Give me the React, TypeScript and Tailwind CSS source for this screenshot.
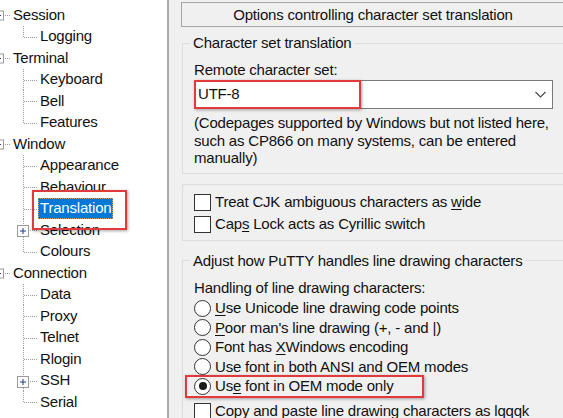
type Item = { t: string; l: 0 | 1; last?: boolean; plus?: boolean; sel?: boolean };

const tree: Item[] = [
  { t: 'Session', l: 0 },
  { t: 'Logging', l: 1, last: true },
  { t: 'Terminal', l: 0 },
  { t: 'Keyboard', l: 1 },
  { t: 'Bell', l: 1 },
  { t: 'Features', l: 1, last: true },
  { t: 'Window', l: 0 },
  { t: 'Appearance', l: 1 },
  { t: 'Behaviour', l: 1 },
  { t: 'Translation', l: 1, sel: true },
  { t: 'Selection', l: 1, plus: true },
  { t: 'Colours', l: 1, last: true },
  { t: 'Connection', l: 0 },
  { t: 'Data', l: 1 },
  { t: 'Proxy', l: 1 },
  { t: 'Telnet', l: 1 },
  { t: 'Rlogin', l: 1 },
  { t: 'SSH', l: 1, plus: true },
  { t: 'Serial', l: 1, last: true },
];

const H = 21.5;
const dot = { stroke: '#9a9a9a', strokeWidth: 1, strokeDasharray: '1 1' };

function TreeRow({ item }: { item: Item }) {
  const mid = Math.round(H / 2) + 0.5;
  return (
    <div className="flex h-[21.5px] items-center">
      {item.l === 0 ? (
        <svg width="11" height={H} className="shrink-0">
          <rect x="-6.5" y={mid - 4.5} width="10" height="9" fill="#fff" stroke="#9a9a9a" />
          <line x1="-3" y1={mid} x2="1" y2={mid} stroke="#1f3f8f" />
          <line x1="5" y1={mid} x2="11" y2={mid} {...dot} />
        </svg>
      ) : (
        <svg width="38" height={H} className="shrink-0">
          <line x1="23.5" y1="0" x2="23.5" y2={item.last ? mid : H} {...dot} />
          <line x1="24" y1={mid} x2="37" y2={mid} {...dot} />
          {item.plus && (
            <g>
              <rect x="17.5" y={mid - 5} width="11" height="11" fill="#fbfbfb" stroke="#9a9a9a" />
              <line x1="20" y1={mid + 0.5} x2="26" y2={mid + 0.5} stroke="#1f3f8f" />
              <line x1="23" y1={mid - 2.5} x2="23" y2={mid + 3.5} stroke="#1f3f8f" />
            </g>
          )}
        </svg>
      )}
      {item.sel ? (
        <span className="relative flex h-[21px] items-center bg-[#0078d7] px-[2px] text-white outline-1 outline-dotted outline-offset-[-1px] outline-[#d9a05a]">
          {item.t}
          <span className="pointer-events-none absolute -top-[8px] -bottom-[11px] -left-[6px] -right-[14px] border-2 border-[#e23a3a] shadow-[1px_1px_3px_rgba(0,0,0,0.35)]" />
        </span>
      ) : (
        <span className="px-[2px]">{item.t}</span>
      )}
    </div>
  );
}

function Check({ children }: { children: React.ReactNode }) {
  return (
    <div className="flex h-[22px] items-center">
      <span className="h-[17px] w-[17px] shrink-0 border border-[#333] bg-white" />
      <span className="ml-[4px]">{children}</span>
    </div>
  );
}

function Radio({ on, children }: { on?: boolean; children: React.ReactNode }) {
  return (
    <div className="flex h-[19.5px] items-center">
      <span className="flex h-[17px] w-[17px] shrink-0 items-center justify-center rounded-full border border-[#333] bg-white">
        {on && <span className="h-[8px] w-[8px] rounded-full bg-[#1a1a1a]" />}
      </span>
      <span className="ml-[4px]">{children}</span>
    </div>
  );
}

const U = ({ children }: { children: React.ReactNode }) => (
  <u className="underline decoration-1 underline-offset-2">{children}</u>
);

export default function App() {
  return (
    <div className="flex h-[418px] w-[563px] overflow-hidden bg-[#f0f0f0] font-['Liberation_Sans',Arial,sans-serif] text-[15px] tracking-[-0.2px] text-[#111]">
      {/* Category tree */}
      <div className="h-full w-[169px] shrink-0 border-r-2 border-[#ababab] bg-white pt-[4px]">
        {tree.map((it) => (
          <TreeRow key={it.t} item={it} />
        ))}
      </div>

      {/* Options panel */}
      <div className="ml-[12px] mt-[2px] flex w-[384px] shrink-0 flex-col">
        <div className="flex h-[25px] items-center justify-center border border-[#a5a5a5] pt-[1px]">
          Options controlling character set translation
        </div>

        <fieldset className="ml-[1px] mt-[7px] border border-[#dcdcdc] px-[11px] pb-[6px]">
          <legend className="-ml-[4px] px-[3px] leading-[18px]">Character set translation</legend>
          <div className="mt-[9px] leading-[18px]">Remote character set:</div>
          <div className="relative mt-[1px] flex h-[29px] items-center justify-between border border-[#7a7a7a] bg-white pl-[3px] pr-[5px]">
            <span>UTF-8</span>
            <svg width="11" height="7" viewBox="0 0 11 7" className="mr-[1px]">
              <path d="M0.5 1 L5.5 6 L10.5 1" fill="none" stroke="#444" strokeWidth="1.1" />
            </svg>
            <span className="pointer-events-none absolute -top-[1px] -bottom-[1px] -left-[1px] w-[167px] border-2 border-[#e23a3a] shadow-[1px_1px_3px_rgba(0,0,0,0.35)]" />
          </div>
          <p className="mt-[5px] leading-[17.5px]">
            (Codepages supported by Windows but not listed here,
            <br />
            such as CP866 on many systems, can be entered
            <br />
            manually)
          </p>
        </fieldset>

        <div className="ml-[1px] mt-[10px] border border-[#dcdcdc] px-[11px] pb-[4px] pt-[7px]">
          <Check>
            Treat CJK ambiguous characters as <U>w</U>ide
          </Check>
          <Check>
            Cap<U>s</U> Lock acts as Cyrillic switch
          </Check>
        </div>

        <fieldset className="ml-[1px] mt-[11px] border border-[#dcdcdc] px-[11px] pb-[10px]">
          <legend className="-ml-[4px] px-[3px] leading-[18px]">
            Adjust how PuTTY handles line drawing characters
          </legend>
          <div className="mt-[9px] leading-[18px]">Handling of line drawing characters:</div>
          <div className="mt-[2px]">
            <Radio>
              <U>U</U>se Unicode line drawing code points
            </Radio>
            <Radio>
              <U>P</U>oor man's line drawing (+, - and |)
            </Radio>
            <Radio>
              Font has <U>X</U>Windows encoding
            </Radio>
            <Radio>Use font in both ANSI and OEM modes</Radio>
            <div className="relative">
              <Radio on>
                Us<U>e</U> font in OEM mode only
              </Radio>
              <span className="pointer-events-none absolute -top-[1.5px] -bottom-[2px] -left-[9px] w-[239px] border-2 border-[#e23a3a] shadow-[1px_1px_3px_rgba(0,0,0,0.35)]" />
            </div>
          </div>
          <div className="mt-[4px]">
            <Check>
              Copy an<U>d</U> paste line drawing characters as lqqqk
            </Check>
          </div>
        </fieldset>
      </div>
    </div>
  );
}
